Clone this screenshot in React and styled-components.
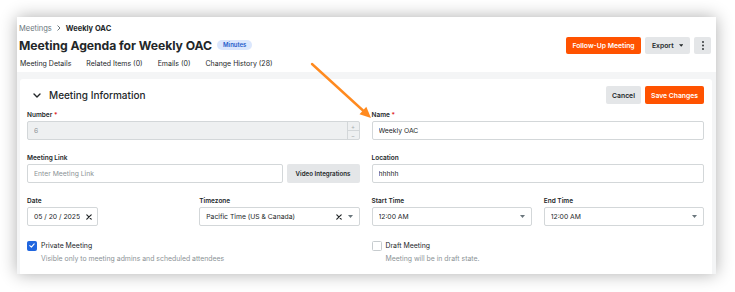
import React from "react";
import styled, { createGlobalStyle } from "styled-components";

const GlobalStyle = createGlobalStyle`
  html, body { margin: 0; padding: 0; background: #ffffff; }
  body { font-family: Inter, "Noto Sans", Arial, sans-serif; color: #232729; -webkit-font-smoothing: antialiased; }
  * { box-sizing: border-box; }
`;

const Page = styled.div`
  position: relative;
  width: 735px;
  height: 292px;
  padding: 17px 19px 18px 17px;
  background: #fff;
`;

const Window = styled.div`
  height: 257px;
  background: #fff;
  box-shadow: 0 0 16px rgba(0, 0, 0, 0.32);
  display: flex;
  flex-direction: column;
  overflow: hidden;
`;

const Header = styled.div`
  padding: 6px 5px 4px 2px;
  display: flex;
  flex-direction: column;
`;

const Breadcrumbs = styled.div`
  display: flex;
  align-items: center;
  gap: 5px;
  height: 10px;
  font-size: 7.5px;
  color: #6a767c;
`;

const Crumb = styled.span`
  font-weight: ${(p) => (p.$current ? 700 : 400)};
  color: ${(p) => (p.$current ? "#232729" : "#6a767c")};
`;

const TitleRow = styled.div`
  margin-top: 3px;
  height: 18px;
  display: flex;
  align-items: center;
  justify-content: space-between;
`;

const TitleGroup = styled.div`
  display: flex;
  align-items: center;
  gap: 5px;
`;

const Title = styled.h1`
  margin: 0;
  font-size: 12.2px;
  font-weight: 700;
  letter-spacing: -0.05px;
  color: #232729;
`;

const Badge = styled.span`
  font-size: 6px;
  font-weight: 600;
  color: #1d5cc9;
  background: #dbe7fd;
  border-radius: 6px;
  padding: 2px 6px;
  line-height: 6px;
`;

const Actions = styled.div`
  display: flex;
  align-items: center;
  gap: 4px;
`;

const Button = styled.button`
  height: ${(p) => p.$h || 17}px;
  padding: 0 ${(p) => (p.$pad ?? 7)}px;
  border: none;
  border-radius: 2px;
  font-family: inherit;
  font-size: ${(p) => p.$fs || 6.8}px;
  font-weight: 600;
  display: inline-flex;
  align-items: center;
  justify-content: center;
  gap: 5px;
  background: ${(p) => (p.$primary ? "#ff5200" : "#e4e6e8")};
  color: ${(p) => (p.$primary ? "#ffffff" : "#232729")};
  width: ${(p) => (p.$w ? `${p.$w}px` : "auto")};
  flex-shrink: 0;
  white-space: nowrap;
`;

const Tabs = styled.div`
  margin-top: 4px;
  height: 10px;
  display: flex;
  align-items: center;
  gap: 15px;
  padding-left: 1px;
  font-size: 7px;
  color: #232729;
`;

const Body = styled.div`
  flex: 1;
  background: #f4f5f6;
  padding: 7px 4px 0 3px;
  display: flex;
`;

const Card = styled.div`
  flex: 1;
  background: #fff;
  border-radius: 3px 3px 0 0;
  padding: 7px 8px 0 7px;
`;

const SectionHeader = styled.div`
  height: 18px;
  display: flex;
  align-items: center;
  justify-content: space-between;
`;

const SectionTitle = styled.div`
  display: flex;
  align-items: center;
  gap: 8px;
  padding-left: 6px;
  font-size: 10px;
  font-weight: 500;
  color: #232729;
`;

const FormGrid = styled.div`
  margin-top: 7px;
  display: grid;
  grid-template-columns: repeat(4, 1fr);
  column-gap: 12px;
  row-gap: 14px;
`;

const Field = styled.div`
  grid-column: span ${(p) => p.$span || 1};
  display: flex;
  flex-direction: column;
`;

const Label = styled.label`
  height: 8px;
  line-height: 8px;
  margin-bottom: 2px;
  font-size: 6.5px;
  font-weight: 600;
  color: #232729;
`;

const Req = styled.span`
  color: #e02424;
`;

const Control = styled.div`
  height: 19px;
  width: ${(p) => (p.$w ? `${p.$w}px` : "100%")};
  border: 1px solid #d3d7d9;
  border-radius: 2px;
  background: ${(p) => (p.$disabled ? "#eef0f1" : "#fff")};
  display: flex;
  align-items: center;
  padding-left: 6px;
  padding-right: ${(p) => (p.$flush ? 0 : 0)}px;
  font-size: 6.8px;
  color: ${(p) => (p.$muted ? "#8c9396" : "#232729")};
  gap: 6px;
`;

const ControlText = styled.span`
  flex: 1;
  white-space: nowrap;
  overflow: hidden;
`;

const Stepper = styled.div`
  width: 12px;
  height: 100%;
  border-left: 1px solid #d3d7d9;
  display: flex;
  flex-direction: column;
`;

const StepCell = styled.div`
  flex: 1;
  display: flex;
  align-items: center;
  justify-content: center;
  font-size: 6px;
  color: #a6acaf;
  border-top: ${(p) => (p.$bottom ? "1px solid #d3d7d9" : "none")};
`;

const Row = styled.div`
  display: flex;
  gap: 4px;
`;

const IconSlot = styled.span`
  display: inline-flex;
  align-items: center;
  padding-right: ${(p) => p.$pr || 0}px;
  color: #232729;
`;

const CheckRow = styled.div`
  grid-column: span 2;
  display: grid;
  grid-template-columns: 10px 1fr;
  column-gap: 4px;
  row-gap: 3px;
  align-items: center;
`;

const Box = styled.span`
  width: 10px;
  height: 10px;
  border-radius: 1.5px;
  background: ${(p) => (p.$checked ? "#2066df" : "#fff")};
  border: 1px solid ${(p) => (p.$checked ? "#2066df" : "#c7cccf")};
  display: flex;
  align-items: center;
  justify-content: center;
`;

const CheckLabel = styled.span`
  font-size: 6.9px;
  color: #232729;
  line-height: 11px;
`;

const CheckDesc = styled.span`
  grid-column: 2;
  font-size: 6.9px;
  color: #8c9396;
  line-height: 9px;
`;

const ArrowLayer = styled.svg`
  position: absolute;
  left: 0;
  top: 0;
  pointer-events: none;
`;

const Caret = ({ color = "#6a767c" }) => (
  <svg width="5" height="3" viewBox="0 0 5 3">
    <path d="M0 0h5L2.5 3z" fill={color} />
  </svg>
);

const Clear = () => (
  <svg width="6" height="6" viewBox="0 0 6 6">
    <path d="M0.8 0.8l4.4 4.4M5.2 0.8L0.8 5.2" stroke="#232729" strokeWidth="1.2" strokeLinecap="round" />
  </svg>
);

const ChevronDown = () => (
  <svg width="8" height="5" viewBox="0 0 8 5">
    <path d="M1 1l3 3 3-3" stroke="#232729" strokeWidth="1.4" fill="none" strokeLinecap="round" strokeLinejoin="round" />
  </svg>
);

const ChevronRight = () => (
  <svg width="4" height="6" viewBox="0 0 4 6">
    <path d="M0.8 0.8L3 3 0.8 5.2" stroke="#6a767c" strokeWidth="1" fill="none" strokeLinecap="round" />
  </svg>
);

const Kebab = () => (
  <svg width="2" height="9" viewBox="0 0 2 9">
    <circle cx="1" cy="1" r="0.9" fill="#232729" />
    <circle cx="1" cy="4.5" r="0.9" fill="#232729" />
    <circle cx="1" cy="8" r="0.9" fill="#232729" />
  </svg>
);

const Check = () => (
  <svg width="6" height="5" viewBox="0 0 6 5">
    <path d="M0.8 2.6l1.6 1.5L5.2 0.9" stroke="#fff" strokeWidth="1.1" fill="none" strokeLinecap="round" strokeLinejoin="round" />
  </svg>
);

export default function App() {
  return (
    <>
      <GlobalStyle />
      <Page>
        <Window>
          <Header>
            <Breadcrumbs>
              <Crumb>Meetings</Crumb>
              <ChevronRight />
              <Crumb $current>Weekly OAC</Crumb>
            </Breadcrumbs>
            <TitleRow>
              <TitleGroup>
                <Title>Meeting Agenda for Weekly OAC</Title>
                <Badge>Minutes</Badge>
              </TitleGroup>
              <Actions>
                <Button $primary $w={75}>Follow-Up Meeting</Button>
                <Button $w={45}>
                  Export <Caret color="#232729" />
                </Button>
                <Button $w={17} $pad={0}>
                  <Kebab />
                </Button>
              </Actions>
            </TitleRow>
            <Tabs>
              <span>Meeting Details</span>
              <span>Related Items (0)</span>
              <span>Emails (0)</span>
              <span>Change History (28)</span>
            </Tabs>
          </Header>
          <Body>
            <Card>
              <SectionHeader>
                <SectionTitle>
                  <ChevronDown />
                  Meeting Information
                </SectionTitle>
                <Actions>
                  <Button $h={18} $w={35}>Cancel</Button>
                  <Button $h={18} $w={59} $primary>Save Changes</Button>
                </Actions>
              </SectionHeader>
              <FormGrid>
                <Field $span={2}>
                  <Label>Number <Req>*</Req></Label>
                  <Control $disabled $muted>
                    <ControlText>6</ControlText>
                    <Stepper>
                      <StepCell>+</StepCell>
                      <StepCell $bottom>−</StepCell>
                    </Stepper>
                  </Control>
                </Field>
                <Field $span={2}>
                  <Label>Name <Req>*</Req></Label>
                  <Control>
                    <ControlText>Weekly OAC</ControlText>
                  </Control>
                </Field>

                <Field $span={2}>
                  <Label>Meeting Link</Label>
                  <Row>
                    <Control $muted>
                      <ControlText>Enter Meeting Link</ControlText>
                    </Control>
                    <Button $h={19} $w={73} $pad={0} $fs={6.2}>Video Integrations</Button>
                  </Row>
                </Field>
                <Field $span={2}>
                  <Label>Location</Label>
                  <Control>
                    <ControlText>hhhhh</ControlText>
                  </Control>
                </Field>

                <Field>
                  <Label>Date</Label>
                  <Control $w={71}>
                    <ControlText>05 / 20 / 2025</ControlText>
                    <IconSlot $pr={5}><Clear /></IconSlot>
                  </Control>
                </Field>
                <Field>
                  <Label>Timezone</Label>
                  <Control>
                    <ControlText>Pacific Time (US &amp; Canada)</ControlText>
                    <IconSlot><Clear /></IconSlot>
                    <IconSlot $pr={6}><Caret /></IconSlot>
                  </Control>
                </Field>
                <Field>
                  <Label>Start Time</Label>
                  <Control>
                    <ControlText>12:00 AM</ControlText>
                    <IconSlot $pr={6}><Caret /></IconSlot>
                  </Control>
                </Field>
                <Field>
                  <Label>End Time</Label>
                  <Control>
                    <ControlText>12:00 AM</ControlText>
                    <IconSlot $pr={6}><Caret /></IconSlot>
                  </Control>
                </Field>

                <CheckRow>
                  <Box $checked><Check /></Box>
                  <CheckLabel>Private Meeting</CheckLabel>
                  <CheckDesc>Visible only to meeting admins and scheduled attendees</CheckDesc>
                </CheckRow>
                <CheckRow>
                  <Box />
                  <CheckLabel>Draft Meeting</CheckLabel>
                  <CheckDesc>Meeting will be in draft state.</CheckDesc>
                </CheckRow>
              </FormGrid>
            </Card>
          </Body>
        </Window>
        <ArrowLayer width="735" height="292" viewBox="0 0 735 292">
          <line x1="312" y1="64" x2="363" y2="110.5" stroke="#ff8a1f" strokeWidth="2.4" strokeLinecap="round" />
          <polygon points="371,118 359.5,114.2 366.3,106.8" fill="#ff8a1f" />
        </ArrowLayer>
      </Page>
    </>
  );
}
